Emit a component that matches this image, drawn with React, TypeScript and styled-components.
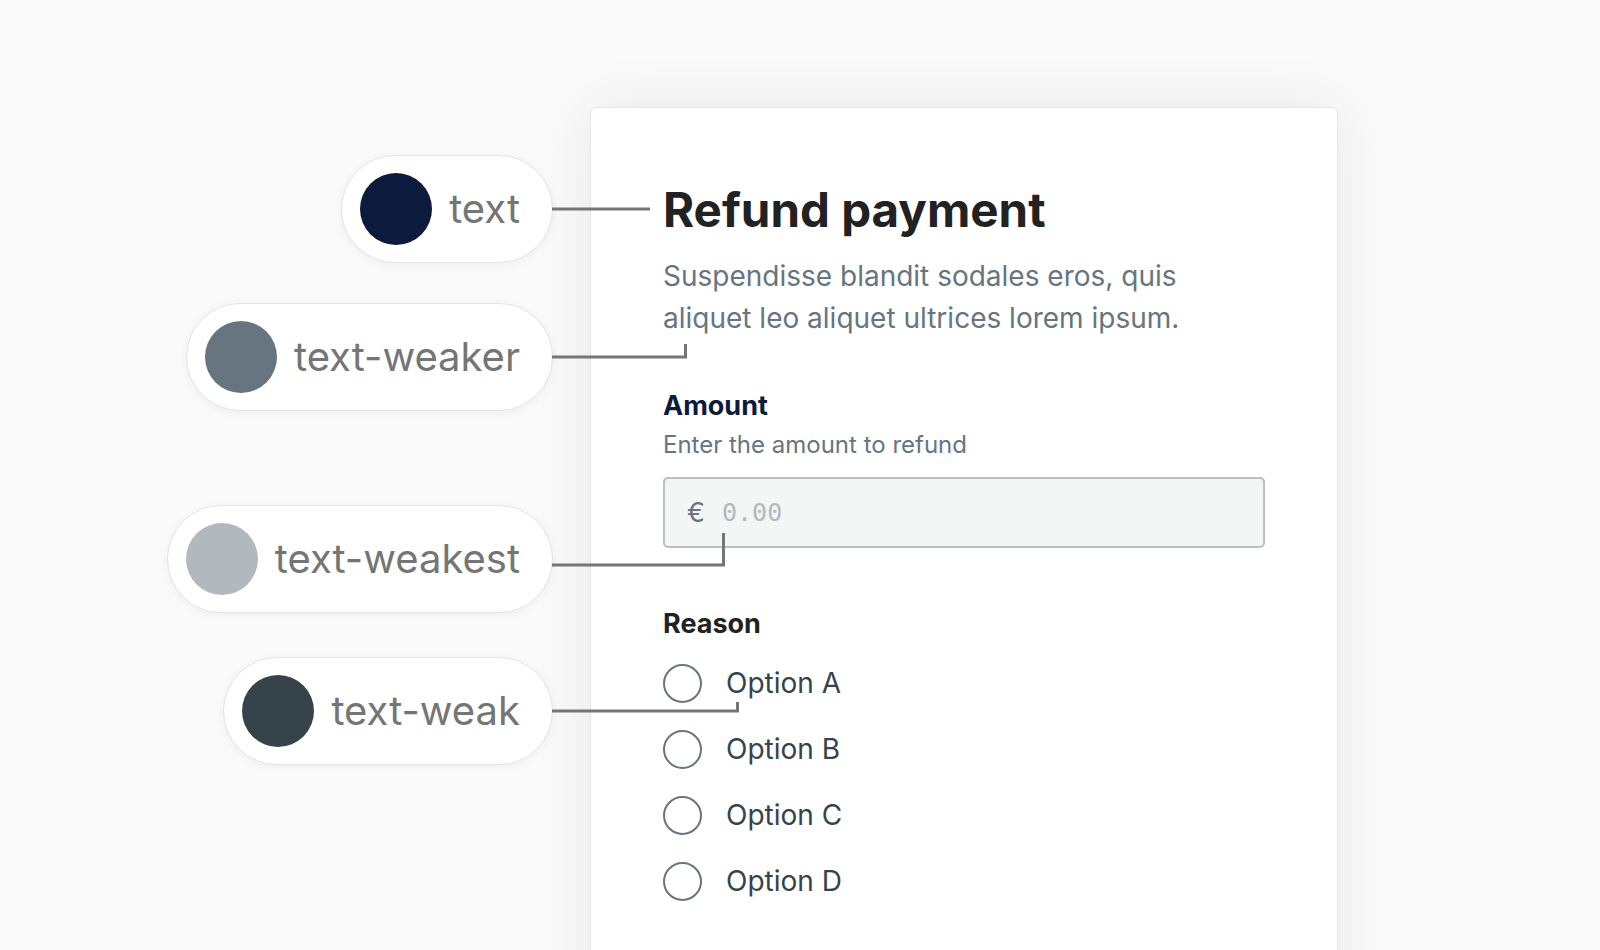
import React from 'react';
import styled, { createGlobalStyle } from 'styled-components';

const GlobalStyle = createGlobalStyle`
  html, body {
    margin: 0;
    height: 950px;
    overflow: hidden;
    background: #fafafa;
    font-family: Inter, "Noto Sans", sans-serif;
  }
`;

const Stage = styled.div`
  position: relative;
  display: flex;
  gap: 37px;
  padding-top: 107px;
  width: 1600px;
  height: 950px;
  box-sizing: border-box;
`;

const LegendColumn = styled.div`
  width: 553px;
  display: flex;
  flex-direction: column;
  align-items: flex-end;
`;

const Pill = styled.div<{ $offset: number }>`
  display: flex;
  align-items: center;
  gap: 17px;
  height: 108px;
  box-sizing: border-box;
  margin-top: ${p => p.$offset}px;
  padding: 0 32px 0 18px;
  background: #fff;
  border: 1px solid #e4e4e9;
  border-radius: 54px;
  box-shadow: 0 2px 10px rgba(0, 0, 0, 0.05);
`;

const Swatch = styled.span<{ $color: string }>`
  width: 72px;
  height: 72px;
  border-radius: 50%;
  background: ${p => p.$color};
  flex-shrink: 0;
`;

const PillLabel = styled.span`
  font-size: 40px;
  color: #757575;
  line-height: 1;
`;

const Card = styled.div`
  width: 748px;
  height: 1000px;
  box-sizing: border-box;
  padding: 74px 72px;
  background: #fff;
  border: 1px solid #e6e6e6;
  border-radius: 6px;
  box-shadow: 0 0 60px rgba(0, 0, 0, 0.08);
`;

const Title = styled.h1`
  margin: 0;
  font-size: 47.5px;
  line-height: 56px;
  font-weight: 700;
  color: #222;
`;

const Description = styled.p`
  margin: 17px 0 0;
  max-width: 560px;
  font-size: 28px;
  line-height: 42px;
  color: #66757f;
`;

const FieldLabel = styled.div<{ $color: string; $top: number }>`
  margin-top: ${p => p.$top}px;
  font-size: 27px;
  line-height: 30px;
  font-weight: 700;
  color: ${p => p.$color};
`;

const Hint = styled.div`
  margin-top: 10px;
  font-size: 24px;
  line-height: 28px;
  color: #66757f;
`;

const InputBox = styled.label`
  margin-top: 18px;
  display: flex;
  align-items: center;
  gap: 17px;
  height: 71px;
  box-sizing: border-box;
  padding: 0 22px;
  background: #f4f6f6;
  border: 2px solid #b8c0c7;
  border-radius: 5px;
`;

const Currency = styled.span`
  font-size: 27px;
  color: #66757f;
`;

const AmountInput = styled.input`
  flex: 1;
  border: none;
  outline: none;
  background: transparent;
  padding: 0;
  font-family: "DejaVu Sans Mono", "Liberation Mono", monospace;
  font-size: 25px;
  color: #36434b;

  &::placeholder {
    color: #b1b9bf;
  }
`;

const OptionList = styled.div`
  margin-top: 11px;
  display: flex;
  flex-direction: column;
`;

const OptionRow = styled.label`
  display: flex;
  align-items: center;
  gap: 24px;
  height: 66px;
  font-size: 28px;
  color: #36434b;
`;

const Radio = styled.span`
  width: 39px;
  height: 39px;
  box-sizing: border-box;
  border: 2px solid #66757f;
  border-radius: 50%;
  flex-shrink: 0;
`;

const Connectors = styled.svg`
  position: absolute;
  left: 0;
  top: 0;
  pointer-events: none;
`;

const legend = [
  { label: 'text', color: '#0c1a3d', offset: 48 },
  { label: 'text-weaker', color: '#66757f', offset: 40 },
  { label: 'text-weakest', color: '#b1b9bf', offset: 94 },
  { label: 'text-weak', color: '#36434b', offset: 44 },
];

const options = ['Option A', 'Option B', 'Option C', 'Option D'];

export default function App() {
  return (
    <>
      <GlobalStyle />
      <Stage>
        <LegendColumn>
          {legend.map(item => (
            <Pill key={item.label} $offset={item.offset}>
              <Swatch $color={item.color} />
              <PillLabel>{item.label}</PillLabel>
            </Pill>
          ))}
        </LegendColumn>

        <Card>
          <Title>Refund payment</Title>
          <Description>
            Suspendisse blandit sodales eros, quis aliquet leo aliquet ultrices lorem ipsum.
          </Description>

          <FieldLabel $color="#0c1a3d" $top={52}>Amount</FieldLabel>
          <Hint>Enter the amount to refund</Hint>
          <InputBox>
            <Currency>€</Currency>
            <AmountInput placeholder="0.00" />
          </InputBox>

          <FieldLabel $color="#222" $top={61}>Reason</FieldLabel>
          <OptionList>
            {options.map(opt => (
              <OptionRow key={opt}>
                <Radio />
                {opt}
              </OptionRow>
            ))}
          </OptionList>
        </Card>

        <Connectors width="1600" height="950" viewBox="0 0 1600 950">
          <g fill="none" stroke="#757575" strokeWidth="3">
            <path d="M552 209 H650" />
            <path d="M552 357 H685.5 V344" />
            <path d="M552 565 H723.5 V533" />
            <path d="M552 711 H737.5 V702" />
          </g>
        </Connectors>
      </Stage>
    </>
  );
}
